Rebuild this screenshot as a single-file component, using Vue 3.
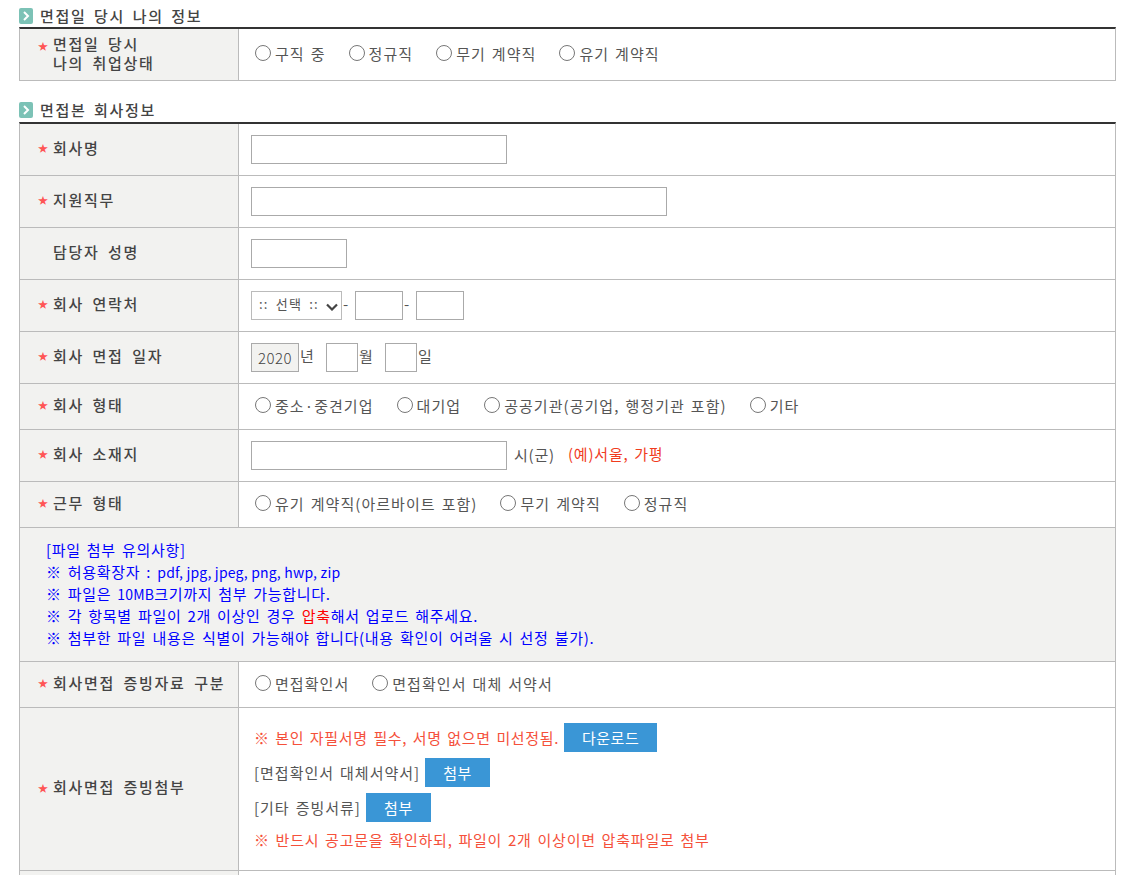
<script setup>
const rows1 = ['구직 중', '정규직', '무기 계약직', '유기 계약직']
const kinds = ['중소·중견기업', '대기업', '공공기관(공기업, 행정기관 포함)', '기타']
const work = ['유기 계약직(아르바이트 포함)', '무기 계약직', '정규직']
const proof = ['면접확인서', '면접확인서 대체 서약서']
</script>

<template>
  <div class="page">
    <h2 class="title"><svg class="ico" viewBox="0 0 14 16"><rect width="14" height="16" rx="2" fill="#7cc2b6"/><path d="M5 4 9 8 5 12" fill="none" stroke="#fff" stroke-width="2"/></svg>면접일 당시 나의 정보</h2>
    <div class="table">
      <div class="row h52">
        <div class="th"><i class="top">★</i><span class="two">면접일 당시<br>나의 취업상태</span></div>
        <div class="td radios">
          <label v-for="t in rows1" :key="t"><b class="radio"></b>{{ t }}</label>
        </div>
      </div>
    </div>

    <h2 class="title second"><svg class="ico" viewBox="0 0 14 16"><rect width="14" height="16" rx="2" fill="#7cc2b6"/><path d="M5 4 9 8 5 12" fill="none" stroke="#fff" stroke-width="2"/></svg>면접본 회사정보</h2>
    <div class="table">
      <div class="row h52">
        <div class="th"><i>★</i><span>회사명</span></div>
        <div class="td"><span class="inp w256"></span></div>
      </div>
      <div class="row h52">
        <div class="th"><i>★</i><span>지원직무</span></div>
        <div class="td"><span class="inp w416"></span></div>
      </div>
      <div class="row h52">
        <div class="th"><i class="blank"></i><span>담당자 성명</span></div>
        <div class="td"><span class="inp w96"></span></div>
      </div>
      <div class="row h52">
        <div class="th"><i>★</i><span>회사 연락처</span></div>
        <div class="td">
          <span class="select"><span class="seltext">:: 선택 ::</span><svg viewBox="0 0 12 8"><path d="M1 1.5 6 6.5 11 1.5" fill="none" stroke="#444" stroke-width="2.2"/></svg></span>
          <span class="tail">-</span><span class="inp w48"></span><span class="tail">-</span><span class="inp w48"></span>
        </div>
      </div>
      <div class="row h52">
        <div class="th"><i>★</i><span>회사 면접 일자</span></div>
        <div class="td">
          <span class="inp year">2020</span><span class="unit">년</span>
          <span class="inp w32"></span><span class="unit">월</span>
          <span class="inp w32"></span><span class="unit">일</span>
        </div>
      </div>
      <div class="row h46">
        <div class="th"><i>★</i><span>회사 형태</span></div>
        <div class="td radios">
          <label v-for="t in kinds" :key="t"><b class="radio"></b>{{ t }}</label>
        </div>
      </div>
      <div class="row h52">
        <div class="th"><i>★</i><span>회사 소재지</span></div>
        <div class="td">
          <span class="inp w256"></span><span class="city">시(군)</span><span class="eg">(예)서울, 가평</span>
        </div>
      </div>
      <div class="row h46">
        <div class="th"><i>★</i><span>근무 형태</span></div>
        <div class="td radios">
          <label v-for="t in work" :key="t"><b class="radio"></b>{{ t }}</label>
        </div>
      </div>
      <div class="notice">
        <p>[파일 첨부 유의사항]</p>
        <p>※ 허용확장자 : <span class="latin">pdf, jpg, jpeg, png, hwp, zip</span></p>
        <p>※ 파일은 <span class="latin">10MB</span>크기까지 첨부 가능합니다.</p>
        <p>※ 각 항목별 파일이 2개 이상인 경우 <em>압축</em>해서 업로드 해주세요.</p>
        <p>※ 첨부한 파일 내용은 식별이 가능해야 합니다(내용 확인이 어려울 시 선정 불가).</p>
      </div>
      <div class="row h46">
        <div class="th"><i>★</i><span>회사면접 증빙자료 구분</span></div>
        <div class="td radios">
          <label v-for="t in proof" :key="t"><b class="radio"></b>{{ t }}</label>
        </div>
      </div>
      <div class="row h163">
        <div class="th"><i>★</i><span>회사면접 증빙첨부</span></div>
        <div class="td stack">
          <div class="line red first">※ 본인 자필서명 필수, 서명 없으면 미선정됨.<button class="btn wide">다운로드</button></div>
          <div class="line plain">[면접확인서 대체서약서]<button class="btn">첨부</button></div>
          <div class="line plain">[기타 증빙서류]<button class="btn">첨부</button></div>
          <div class="line red last">※ 반드시 공고문을 확인하되, 파일이 2개 이상이면 압축파일로 첨부</div>
        </div>
      </div>
      <div class="row h52">
        <div class="th"></div>
        <div class="td"></div>
      </div>
    </div>
  </div>
</template>

<style scoped>
.page {
  width: 1097px;
  padding: 0 0 0 19px;
  font-family: "Noto Sans CJK KR", "Noto Sans", sans-serif;
  font-size: 15px;
  color: #555;
  line-height: 20px;
}
.title {
  margin: 0;
  height: 27px;
  padding-top: 4px;
  box-sizing: border-box;
  display: flex;
  align-items: center;
  font-size: 15px;
  font-weight: 500;
  letter-spacing: 1.7px;
  word-spacing: 2.5px;
  color: #444;
}
.second { margin-top: 15px; padding-top: 1px; height: 26px; }
.ico { width: 14px; height: 16px; margin-right: 7px; flex: none; }
.table {
  border-top: 2px solid #333;
  border-left: 1px solid #bbb;
  border-right: 1px solid #bbb;
}
.row {
  display: flex;
  border-bottom: 1px solid #bbb;
  box-sizing: border-box;
}
.h52 { height: 52px; }
.h46 { height: 46px; }
.h163 { height: 163px; }
.th {
  width: 219px;
  flex: none;
  background: #f2f2f0;
  border-right: 1px solid #bbb;
  display: flex;
  align-items: center;
  padding-left: 18px;
  box-sizing: border-box;
  font-weight: 500;
  color: #444;
  letter-spacing: 1.7px;
  word-spacing: 3.5px;
  line-height: 19px;
}
.th span { margin-top: -5px; }
.th span.two { margin-top: -3px; }
.th i {
  width: 15px;
  flex: none;
  align-self: center;
  font-style: normal;
  color: #f55;
  font-size: 10px;
  letter-spacing: 0;
  line-height: 10px;
  margin-top: -3px;
}
.th i.top { margin-top: -17px; }
.th i.blank { height: 10px; }
.td {
  flex: 1;
  display: flex;
  align-items: center;
  padding-left: 12px;
  min-width: 0;
  letter-spacing: 0.8px;
  word-spacing: 1.6px;
}
.radios { padding-left: 16px; gap: 23px; letter-spacing: 1.05px; }
.radios label { display: flex; align-items: center; color: #555; margin-top: -1px; }
.radio {
  width: 16px;
  height: 16px;
  border: 1px solid #777;
  border-radius: 50%;
  background: #fff;
  margin-right: 4px;
  box-sizing: border-box;
  flex: none;
  margin-top: -3px;
}
.inp {
  display: inline-block;
  height: 29px;
  box-sizing: border-box;
  border: 1px solid #aaa;
  background: #fff;
  flex: none;
}
.w256 { width: 256px; }
.w416 { width: 416px; }
.w96 { width: 96px; }
.w48 { width: 48px; }
.w32 { width: 32px; margin-left: 13px; }
.year {
  width: 48px;
  background: #f2f2f0;
  text-align: center;
  line-height: 28px;
  letter-spacing: 0.5px;
  font-size: 15px;
  font-weight: 300;
  color: #444;
}
.select {
  width: 91px;
  height: 29px;
  box-sizing: border-box;
  border: 1px solid #bbb;
  padding-left: 7px;
  display: flex;
  align-items: center;
  position: relative;
  font-size: 13px;
  letter-spacing: 1.2px;
  word-spacing: 3px;
  color: #555;
  flex: none;
}
.seltext { margin-top: -3px; }
.select svg { width: 12px; height: 8px; position: absolute; right: 3px; top: 11px; }
.tail { margin: -4px 6px 0 1px; width: 6px; }
.unit { width: 13px; margin: -4px 0 0 1px; letter-spacing: 0; }
.city { margin-left: 7px; margin-top: -1px; }
.eg { margin-left: 13px; color: #f03c1e; margin-top: -3px; }
.notice {
  background: #f2f2f0;
  border-bottom: 1px solid #bbb;
  box-sizing: border-box;
  height: 134px;
  padding: 11px 0 0 26px;
  color: #00f;
  line-height: 22px;
  letter-spacing: 0.7px;
  word-spacing: 2px;
}
.notice p { margin: 0; }
.notice em { color: #f00; font-style: normal; }
.latin { font-size: 14px; letter-spacing: 0.2px; word-spacing: 0; }
.stack {
  flex-direction: column;
  align-items: flex-start;
  justify-content: flex-start;
  padding-top: 15px;
  padding-left: 15px;
}
.line { display: flex; align-items: center; height: 29px; margin-bottom: 6px; color: #555; }
.line.plain { letter-spacing: 1px; }
.line.red { color: #f5503a; }
.line.first { letter-spacing: 0.67px; }
.line.last { margin-top: -3px; }
.btn {
  margin-left: 5px;
  width: 65px;
  height: 29px;
  border: 0;
  background: #3a96d6;
  color: #fff;
  font: inherit;
  letter-spacing: 0.5px;
  padding: 0;
}
.wide { width: 93px; }
</style>

<style>
html, body { margin: 0; height: 875px; overflow: hidden; background: #fff; }
</style>
